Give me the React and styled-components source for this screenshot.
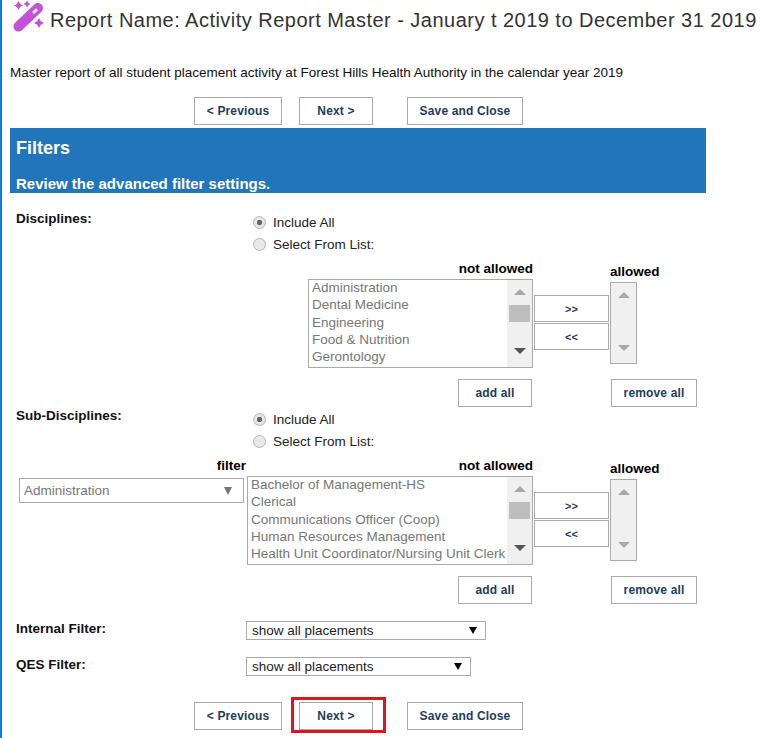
import React from "react";
import styled, { createGlobalStyle } from "styled-components";

const Global = createGlobalStyle`
  html, body { margin: 0; padding: 0; background: #fff; }
  body { font-family: "Liberation Sans", Arial, sans-serif; color: #000; }
`;

const Page = styled.div`
  width: 770px;
  height: 738px;
  overflow: hidden;
  box-sizing: border-box;
  border-left: 2px solid #0a7fd9;
  padding-left: 8px;
`;

const TitleBar = styled.h1`
  display: flex;
  align-items: center;
  gap: 5px;
  margin: 0;
  height: 40px;
  padding-left: 3px;
  font-size: 20px;
  font-weight: 400;
  letter-spacing: 0.475px;
  white-space: nowrap;
  color: #333;
  svg { flex: none; width: 32px; height: 32px; margin-top: -8px; }
`;

const Description = styled.p`
  margin: 24px 0 0;
  height: 17px;
  line-height: 17px;
  font-size: 13.5px;
  color: #111;
  white-space: nowrap;
`;

const ButtonRow = styled.div`
  display: flex;
  padding-left: 184px;
  margin-top: ${(p) => p.$top}px;
`;

const Button = styled.button`
  box-sizing: border-box;
  height: 28px;
  width: ${(p) => p.$w}px;
  margin-right: ${(p) => p.$after || 0}px;
  padding: 0;
  border: 1px solid #aaa;
  background: #fff;
  color: #1d3d5c;
  font: bold 12px "Liberation Sans", Arial, sans-serif;
  letter-spacing: 0.15px;
`;

const Highlight = styled.span`
  position: relative;
  display: block;
  &::after {
    content: "";
    position: absolute;
    left: -8px;
    top: -5px;
    width: 89px;
    height: 30px;
    border: 3px solid #e0141f;
    pointer-events: none;
  }
`;

const Banner = styled.header`
  box-sizing: border-box;
  width: 696px;
  height: 65px;
  margin-top: 3px;
  padding: 10px 6px 0;
  background: #2176bb;
  color: #fff;
  font-weight: 700;
`;

const BannerTitle = styled.div`
  font-size: 18px;
  line-height: 20px;
`;

const BannerSub = styled.div`
  margin-top: 18px;
  font-size: 15px;
  line-height: 16px;
`;

const ChoiceRow = styled.div`
  display: flex;
  margin-top: ${(p) => p.$top}px;
`;

const FieldLabel = styled.div`
  width: 236px;
  box-sizing: border-box;
  padding-left: 6px;
  font-size: 13.5px;
  font-weight: 700;
  line-height: 16px;
  color: #111;
`;

const RadioGroup = styled.div`
  display: flex;
  flex-direction: column;
  gap: 7px;
  padding-top: 4px;
`;

const RadioLine = styled.div`
  display: flex;
  align-items: center;
  gap: 7px;
  padding-left: 7px;
  height: 15px;
  font-size: 13.5px;
  color: #222;
`;

const RadioDot = styled.span`
  box-sizing: border-box;
  width: 13px;
  height: 13px;
  border-radius: 50%;
  border: 1px solid #b5b5b5;
  background: ${(p) => (p.$on ? "radial-gradient(circle, #666 0 2.5px, #e6e6e6 3px)" : "#e9e9e9")};
`;

const Transfer = styled.div`
  display: flex;
  align-items: flex-start;
  margin-top: 10px;
  padding-left: ${(p) => p.$pad}px;
`;

const FilterColumn = styled.div`
  width: 225px;
  margin-right: 3px;
`;

const ColumnHead = styled.div`
  height: 14px;
  line-height: 14px;
  font-size: 13.5px;
  font-weight: 700;
  text-align: right;
  white-space: nowrap;
  margin-right: ${(p) => p.$over || 0}px;
  color: #000;
`;

const FilterSelect = styled.div`
  box-sizing: border-box;
  display: flex;
  align-items: center;
  justify-content: space-between;
  height: 25px;
  margin-top: ${(p) => p.$top || 0}px;
  padding: 0 11px 0 4px;
  border: 1px solid #aaa;
  font-size: 13.5px;
  color: #777;
`;

const Caret = styled.span`
  width: 0;
  height: 0;
  border-left: 4px solid transparent;
  border-right: 4px solid transparent;
  border-top: ${(p) => p.$h}px solid ${(p) => p.$color};
`;

const ListColumn = styled.div`
  width: ${(p) => p.$w}px;
`;

const ListBox = styled.div`
  box-sizing: border-box;
  display: flex;
  justify-content: space-between;
  height: 89px;
  margin-top: 3px;
  border: 1px solid #aaa;
  overflow: hidden;
`;

const Options = styled.ul`
  list-style: none;
  margin: -1px 0 0;
  padding: 0 0 0 3px;
  font-size: 13.5px;
  line-height: 17.25px;
  color: #777;
  white-space: nowrap;
`;

const Scrollbar = styled.div`
  flex: none;
  box-sizing: border-box;
  display: flex;
  flex-direction: column;
  align-items: center;
  width: 25px;
  height: 100%;
  padding-top: 9px;
  background: #f0f0f0;
`;

const ArrowUp = styled.span`
  width: 0;
  height: 0;
  border-left: 6px solid transparent;
  border-right: 6px solid transparent;
  border-bottom: 6px solid #a8a8a8;
`;

const ArrowDown = styled.span`
  width: 0;
  height: 0;
  margin-top: ${(p) => p.$top}px;
  border-left: 6px solid transparent;
  border-right: 6px solid transparent;
  border-top: 6px solid ${(p) => p.$color};
`;

const Thumb = styled.span`
  width: 21px;
  height: 17px;
  margin-top: 10px;
  background: #bdbdbd;
`;

const MoveColumn = styled.div`
  display: flex;
  flex-direction: column;
  gap: 1px;
  margin: 33px 1px 0;
`;

const MoveButton = styled.button`
  box-sizing: border-box;
  width: 75px;
  height: 27px;
  padding: 0;
  border: 1px solid #aaa;
  background: #fff;
  color: #1d3d5c;
  font: bold 11px "Liberation Sans", Arial, sans-serif;
`;

const AllowedColumn = styled.div`
  width: 50px;
  padding-top: 3px;
`;

const AllowedHead = styled.div`
  height: 14px;
  line-height: 14px;
  font-size: 13.5px;
  font-weight: 700;
  white-space: nowrap;
`;

const AllowedBox = styled.div`
  box-sizing: border-box;
  display: flex;
  flex-direction: column;
  align-items: center;
  width: 27px;
  height: 82px;
  margin-top: 3px;
  padding-top: 9px;
  border: 1px solid #aaa;
  background: #f0f0f0;
`;

const ListActions = styled.div`
  display: flex;
  margin-top: 11px;
  padding-left: 448px;
`;

const SelectRow = styled.div`
  display: flex;
  align-items: flex-start;
  margin-top: ${(p) => p.$top}px;
`;

const PlainSelect = styled.div`
  box-sizing: border-box;
  display: flex;
  align-items: center;
  justify-content: space-between;
  width: ${(p) => p.$w}px;
  height: 19px;
  padding: 0 8px 0 5px;
  border: 1px solid #aaa;
  font-size: 13.5px;
  color: #222;
`;

const DISCIPLINES = ["Administration", "Dental Medicine", "Engineering", "Food & Nutrition", "Gerontology"];
const SUBS = [
  "Bachelor of Management-HS",
  "Clerical",
  "Communications Officer (Coop)",
  "Human Resources Management",
  "Health Unit Coordinator/Nursing Unit Clerk",
];

const star = (x, y, r) => {
  const i = r * 0.36;
  return `M${x} ${y - r}L${x + i} ${y - i}L${x + r} ${y}L${x + i} ${y + i}L${x} ${y + r}L${x - i} ${y + i}L${x - r} ${y}L${x - i} ${y - i}Z`;
};

const WandIcon = () => (
  <svg viewBox="0 0 32 32" aria-hidden="true">
    <g fill="#c451d8">
      <path d={star(5.5, 5.5, 4.5)} />
      <path d={star(14, 4, 3.5)} />
      <path d={star(26, 23, 5)} />
    </g>
    <path d="M5.5 26.5 L25 8" stroke="#c451d8" strokeWidth="10" strokeLinecap="round" />
    <path d="M20 13 L24 9.2" stroke="#fff" strokeWidth="2.8" />
  </svg>
);

const Nav = ({ top, marked }) => (
  <ButtonRow $top={top}>
    <Button $w={88} $after={17}>&lt; Previous</Button>
    {marked ? (
      <Highlight>
        <Button $w={74} $after={34}>Next &gt;</Button>
      </Highlight>
    ) : (
      <Button $w={74} $after={34}>Next &gt;</Button>
    )}
    <Button $w={116}>Save and Close</Button>
  </ButtonRow>
);

const Radios = () => (
  <RadioGroup>
    <RadioLine><RadioDot $on />Include All</RadioLine>
    <RadioLine><RadioDot />Select From List:</RadioLine>
  </RadioGroup>
);

const TransferBlock = ({ items, pad, width, filter }) => (
  <>
    <Transfer $pad={pad}>
      {filter && (
        <FilterColumn>
          <ColumnHead $over={-2}>filter</ColumnHead>
          <FilterSelect $top={5}>Administration<Caret $h={8} $color="#777" /></FilterSelect>
        </FilterColumn>
      )}
      <ListColumn $w={width}>
        <ColumnHead>not allowed</ColumnHead>
        <ListBox>
          <Options>{items.map((i) => <li key={i}>{i}</li>)}</Options>
          <Scrollbar>
            <ArrowUp />
            <Thumb />
            <ArrowDown $top={26} $color="#555" />
          </Scrollbar>
        </ListBox>
      </ListColumn>
      <MoveColumn>
        <MoveButton>&gt;&gt;</MoveButton>
        <MoveButton>&lt;&lt;</MoveButton>
      </MoveColumn>
      <AllowedColumn>
        <AllowedHead>allowed</AllowedHead>
        <AllowedBox>
          <ArrowUp />
          <ArrowDown $top={47} $color="#a8a8a8" />
        </AllowedBox>
      </AllowedColumn>
    </Transfer>
    <ListActions>
      <Button $w={74} $after={79}>add all</Button>
      <Button $w={86}>remove all</Button>
    </ListActions>
  </>
);

export default function App() {
  return (
    <Page>
      <Global />
      <TitleBar>
        <WandIcon />
        Report Name: Activity Report Master - January t 2019 to December 31 2019
      </TitleBar>
      <Description>
        Master report of all student placement activity at Forest Hills Health Authority in the calendar year 2019
      </Description>
      <Nav top={16} />
      <Banner>
        <BannerTitle>Filters</BannerTitle>
        <BannerSub>Review the advanced filter settings.</BannerSub>
      </Banner>

      <ChoiceRow $top={18}>
        <FieldLabel>Disciplines:</FieldLabel>
        <Radios />
      </ChoiceRow>
      <TransferBlock items={DISCIPLINES} pad={298} width={225} />

      <ChoiceRow $top={1}>
        <FieldLabel>Sub-Disciplines:</FieldLabel>
        <Radios />
      </ChoiceRow>
      <TransferBlock items={SUBS} pad={9} width={286} filter />

      <SelectRow $top={17}>
        <FieldLabel>Internal Filter:</FieldLabel>
        <PlainSelect $w={240}>show all placements<Caret $h={7} $color="#000" /></PlainSelect>
      </SelectRow>
      <SelectRow $top={17}>
        <FieldLabel>QES Filter:</FieldLabel>
        <PlainSelect $w={225}>show all placements<Caret $h={7} $color="#000" /></PlainSelect>
      </SelectRow>
      <Nav top={26} marked />
    </Page>
  );
}
